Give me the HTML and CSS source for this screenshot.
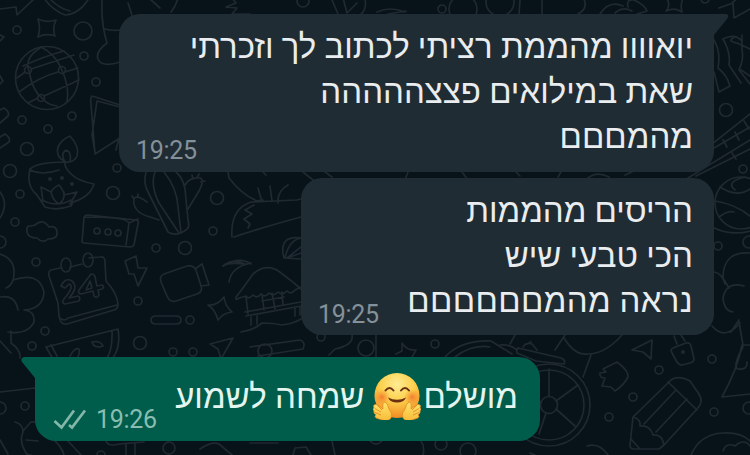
FILE: index.html
```html
<!DOCTYPE html>
<html lang="he">
<head>
<meta charset="utf-8">
<title>צ'אט</title>
<link rel="stylesheet" href="styles.css">
</head>
<body>
<svg class="wallpaper" viewBox="0 0 750 455" aria-hidden="true">
  <!-- small dots -->
  <g>
    <circle cx="17" cy="30" r="4"/><circle cx="83" cy="31" r="9"/><circle cx="84" cy="56" r="4"/><circle cx="96" cy="82" r="4"/>
    <circle cx="72" cy="116" r="4"/><circle cx="48" cy="129" r="4"/><circle cx="22" cy="120" r="4"/><circle cx="27" cy="149" r="6.500"/>
    <circle cx="10" cy="171" r="6.500"/><circle cx="20" cy="194" r="4"/><circle cx="15" cy="222" r="4"/><circle cx="117" cy="168" r="4"/>
    <circle cx="113" cy="193" r="6.500"/><circle cx="217" cy="198" r="6.500"/><circle cx="213" cy="231" r="4"/><circle cx="185" cy="248" r="6.500"/>
    <circle cx="156" cy="248" r="4"/><circle cx="36" cy="262" r="4"/><circle cx="138" cy="301" r="4"/><circle cx="190" cy="320" r="4"/>
    <circle cx="140" cy="343" r="6.500"/><circle cx="173" cy="352" r="4"/><circle cx="193" cy="352" r="4"/><circle cx="45" cy="331" r="4"/>
    <circle cx="32" cy="346" r="4"/><circle cx="25" cy="406" r="4"/><circle cx="0" cy="408" r="6"/><circle cx="0" cy="242" r="6"/>
    <circle cx="169" cy="448" r="6"/><circle cx="101" cy="455" r="4"/><circle cx="321" cy="337" r="4"/><circle cx="435" cy="344" r="4"/>
    <circle cx="441" cy="444" r="6"/><circle cx="468" cy="451" r="8"/><circle cx="609" cy="417" r="4"/><circle cx="633" cy="397" r="4"/>
    <circle cx="659" cy="370" r="4"/><circle cx="712" cy="359" r="4"/><circle cx="714" cy="412" r="4"/><circle cx="749" cy="408" r="6"/>
    <circle cx="718" cy="246" r="4"/><circle cx="749" cy="242" r="6"/><circle cx="726" cy="110" r="6.500"/><circle cx="743" cy="169" r="4"/>
    <circle cx="303" cy="1" r="6"/><circle cx="705" cy="-1" r="4"/>
  </g>
  <!-- leaf, sparkle, globe -->
  <path d="M0 9l16-2 1 8 18-17M44-2q8 12 21 17q15-1 24-17M50-1q10 10 20 12"/>
  <path d="M38 19q8 4 18 1q-4 8-1 16q-9-3-17 1q3-9 0-18zM0 35l4 2-4 4M0 76l3 5-3 3"/>
  <circle cx="47" cy="78" r="31.500"/>
  <path d="M40 48q-16 10-11 23q4 20 12 26q6 8 16 9M41 47q14 7 20 21q9 19 6 34M64 51Q45 56 23 66M25 72L17 78M58 72Q39 77 19 92M31 69L74 55M65 72l13-4M79 80L44 96M38 98l-10 5"/>
  <g><circle cx="28" cy="70" r="3.500"/><circle cx="62" cy="70" r="3.500"/><circle cx="41" cy="98" r="3.500"/></g>
  <!-- stocking, paper -->
  <path d="M102 0q-1 24 5 43q-12 9-9 16q4 9 22 3M105 29q7 2 15 1M128 3l4 12M150-1l10 9M178-2q-2 8-7 14"/>
  <path d="M120 105L92 96q-2 2-1 8l4 50 25-16M120 107L97 101l-5 34 3 17M119 138l-3 12"/>
  <path d="M0 110l4-2q6 4 4 8l-8 7M0 137l5-3q6 4 4 8l-9 6M0 192q9 12 0 26"/>
  <!-- oil lamp -->
  <path d="M65 162q-10-6-7-15q4-8 12-11q10 11 7 20q-3 7-12 6q-5-8 1-12q6 2 4 11M65 162q-27 0-35 7q-4 17 7 26l8 12q11 4 26-1l2-4q17-5 21-18q-16-3-23-10t-6-12zM30 170q12 6 29 0M43 201l-2-14 10 5q3-5 8-7q5 6 5 10l13-3-7 12M51 192q2 9 8 12q6-4 5-12M42 200q15 8 29 0"/>
  <g class="solid"><circle cx="50" cy="179" r="2"/><circle cx="62" cy="178" r="2"/><circle cx="72" cy="184" r="2"/></g>
  <!-- message block and cloud -->
  <path d="M82 242l2-24q0-3 4-3l48 5q3 0 2 4l-4 21q-1 2-4 2l-46-4zM84 217q43 0 45 6l-3 22M129 223l9-4"/>
  <g><circle cx="97" cy="231" r="3"/><circle cx="108" cy="232" r="3"/><circle cx="118" cy="233" r="3"/></g>
  <path d="M31 226q-5-1-4 6q1 6 10 6q6 6 11 1q10 0 9-7q-1-7-8-5q-6-9-14-2z"/>
  <!-- cactus -->
  <path d="M146 172q-3 11 2 20l20 40q8 5 18-2q4-2 2-10l-3-31q-2-11-9-17M155 172q-5 13 4 31l20 30M164 172q13 16 14 35l3 26M147 202q-11-8-13-3q-2 13 16 18l9 3M185 185q4-8 15-7q5 1-1 13l-11 18M134 199l-2-3M138 197v-3M193 179l-1-4M197 178l2-4M201 182l4-1"/>
  <!-- hand and rabbit outline -->
  <path d="M228 172l1 6q12 16 28 23l6-1M232 237q-2-28 19-35l46-2q10-2 18-10M234 237q23-8 67-20M254 205l-9 5 7 4-8 5 6 5-2 4M258 188l4 14M270 186l2 15M288 185q-11 6-10 18"/>
  <path d="M303 172l10 8M325 172l7 5M405 180l3-8M462 172l6 8"/>
  <!-- calendar -->
  <path d="M60 268l-9 2q-3 1-2 6l9 27 1 13q1 9 8 8l47-14q4-1 4-6-1-11-12-23l-1-19q0-6-5-5l-11 1M70 267l12-3M60 318q4 4 8 0l49-13"/>
  <ellipse cx="66" cy="265" rx="5" ry="7"/><ellipse cx="88" cy="260" rx="5" ry="7"/>
  <path d="M61 286q4-9 11-5q7 6-3 17l9-2q3 1 1 5l-14 3q-4-1-1-5q11-13 5-15l-4 4zM91 274q4 0 4 3l2 9 5-1q3 2 0 4l-4 1 1 5q-2 4-5 1l-1-5-12 3q-4-1-2-4zM90 281l-4 9 6-2z"/>
  <!-- bolt, camera, pill, star -->
  <path d="M125 261l11-5 2 12 9 0-9 18-4-12-5 0zM164 274l23-8q7-1 9 4l5 16q2 6-4 8l-21 7q-6 2-9-5l-6-14q-2-6 3-8zM195 269l7-5 7 21-8 1M156 316h20q5 0 5 4t-5 4h-20q-5 0-5-4t5-4zM208 305q9 1 16-8q1 9 8 15q-9 1-14 8q-3-11-10-15zM210 344l23-6-12 21-3-10z"/>
  <!-- beach hut -->
  <path d="M236 297q5-6 17-23q14-12 28-1q11 8 20 16M236 297q-1 4 3 1l7-2q2 4 7-1q4 4 8-1q4 4 8-1q4 4 9-1q4 4 9-1q4 4 8-1l6-3M223 266q9-8 22-2q-17-2-22 2M223 266q16-10 28-2M229 282q2-15 22-19M301 238q-23-3-17 20l17 1M285 258q4-18 16-20M301 247l-14 11 14-5M246 297l2 17M262 294l2 16M272 293l3 16M282 292l1 13M262 301l22-4M245 312l56-10M246 316l55-10M251 317v8M257 316v8M295 308v8M300 307v8M241 332q13-2 21-9 12 0 19 2q12-1 20-6"/>
  <!-- flower tree and fruit -->
  <path d="M0 254q18 6 13 26q-2 6-7 8M13 280q26-9 31 12q-1 17-20 18M0 297q15-3 18 13M24 310q11 1 10 12q-6 13-26 10M11 331v12q10 7 9 15M0 341l11 12M46 347l72-18q4 25-13 36M46 347q7 13 12 18M51 345l6 11M112 331q1 22-8 31M70 356q5-9 9-7q1 3-1 8M92 342q8-2 11 4q-9 3-11-4M0 392l35-4M15 422q8 2 8 10q-4 9 2 19q1 4 6 4M23 431l8-9q6-1 10 4l12 13q9 8 11 16M26 440l12 1M0 440l8 14M106 441q2 6 13 3l25-2M126 444v11M135 443v12M68 441l14 15"/>
  <!-- top strip -->
  <path d="M226 7l10-4-5-6M226 7l11 1-5 6h18M332 0l6 14M343-2l4 15 10-10M365-1q2 10-4 15M377 12q13-6 28 0M388 14l18-3M520 0l-1 14M542-2v16M584-1q4 10-6 15M600 14q9-14 23-8M615 13q8-7 17-2M628 7q-2-8 6-7q11 5 13 11l-10 3"/>
  <g><circle cx="442" cy="9" r="4"/><circle cx="463" cy="9" r="14"/><circle cx="500" cy="2" r="14"/></g>
  <path d="M667-1q4 7-1 12q9-4 16 1q-2-7 1-14M719 8l14-5 1 15 16-9M733 2l5-4"/>
  <!-- books and film, right edge -->
  <path d="M714 40q7 12 4 28q9 7 12 18l-11 6-5-20M723 39q12-6 19 2M723 39q8 14 6 26l12 18M742 35v15M735 37q-9 4 2 6l13 6M742 50q2 9-3 20l11 14M741 70l9 6"/>
  <path d="M688 178l62-38M696 176l54-27M692 160l58-46M714 148l36-21M723 140l4 7M735 132l4 8M732 153l4 6M744 121l5 8"/>
  <circle cx="741" cy="203" r="26"/><path d="M720 187q17 11 30 2M715 201q20 3 35 15M719 217q9-7 15-5M745 177q-20 5-10 13"/>
  <!-- tree right -->
  <path d="M714 228q18 8 36 3M750 253q-27-2-27 25l6 10M714 272q8 1 11 12M744 286q-18-5-21 12q1 13 10 14M712 326q13 15 28-3M739 320l-8 12M739 322l4 23h7M742 345q-4 23-20 52l28-3M743 347q-11 20-5 22q10 1 9-7"/>
  <!-- lock, plane, puzzle, pencil -->
  <path d="M674 336l3 8M681 335l4 6M673 348l13-5q4-1 5 3l3 13q0 3-4 4l-8 2q-3 0-5-3l-5-9q-2-4 1-5zM632 350l20-10-1 19-8-7zM603 369l14-7q12 9 11 15q-4 8-13 14l-4-4-9-1 3-8q-6 0-5-5l6-1z"/>
  <circle class="solid" cx="683" cy="352" r="2"/>
  <path d="M633 417l38-37q7-5 19 1l9 13q5 8-2 15l-33 36-5 4h-25q-4 0-4-4zM633 417q8 2 7 9q10-1 13 9q9-1 11 10M644 424l32-34M668 382l29 28M656 432l31-33M631 439l8 9"/>
  <!-- wheel -->
  <circle cx="549" cy="405" r="41"/><circle cx="549" cy="405" r="35"/><circle cx="549" cy="405" r="8.500"/>
  <path d="M549 396v-27M556 401l22-16M556 409l19 17M546 413l-7 21M541 402l-20-10M518 348l43 10q5 2 3 6l-28-3-19-8q-1-4 1-5M523 347q3-5 9-3l5 6M527 344l4-2M510 344l5-9M500 345q10-1 17 5M555 350l10-15M564 338q11 18 24 16q17 0 34-19M591 355l-8 22"/>
  <path d="M587 446q12-4 21 9M691 455q9-21 32-22q18-1 27 8M723 451q3-9 12-5q9-8 15 0M530 453l5 2"/>
  <!-- strip between bubbles two and three -->
  <path d="M250 347l50-7q6 2 3 9l-45 7M329 355l6-6q19-4 17-14M376 335v22M396 354l6-3v-8q5 8 14 7l-4 7M445 357q16-17 46-16l21 13M455 357q17-13 35-10"/>
  <circle cx="265" cy="351" r="7"/><circle cx="366" cy="348" r="8"/>
  <path d="M250 443h28M293 455l2-7 11-1 5 8M332 441l3 14M370 441q6 6 12 0M421 441q4 6 2 14M200 449q12-8 19-5l13 11"/>
  <path d="M263 172l3 3M516 172l4 4M561 172l-3 5M588 178q9-7 21-1M625 175l7-3"/>
</svg>

<main class="chat">
  <section class="bubble incoming first" dir="rtl">
    <svg class="tail" viewBox="0 0 20 24"><path d="M0 0H17Q21 1 18 5L5 21L5 24H0z"/></svg>
    <p><span>יואוווו מהממת רציתי לכתוב לך וזכרתי</span><span>שאת במילואים פצצההההה</span><span>מהמםםם</span></p>
    <div class="meta" dir="ltr"><time>19:25</time></div>
  </section>
  <section class="bubble incoming second" dir="rtl">
    <p><span>הריסים מהממות</span><span>הכי טבעי שיש</span><span class="stretched">נראה מהמםםםםםם</span></p>
    <div class="meta" dir="ltr"><time>19:25</time></div>
  </section>
  <section class="bubble outgoing" dir="rtl">
    <svg class="tail" viewBox="0 0 20 24"><path d="M20 0H3Q-1 1 1 5L14 21V24H20z"/></svg>
    <p class="row"><span>מושלם</span>
      <svg class="hug" viewBox="0 0 48 48" role="img" aria-label="חיבוק">
        <defs>
          <radialGradient id="face" cx="50%" cy="25%" r="75%"><stop offset="0" stop-color="#ffec94"/><stop offset=".5" stop-color="#fdd04c"/><stop offset="1" stop-color="#ef8a24"/></radialGradient>
          <radialGradient id="cheek"><stop offset="0" stop-color="#f2652b" stop-opacity=".75"/><stop offset="1" stop-color="#f2852b" stop-opacity="0"/></radialGradient>
          <linearGradient id="hand" x1="0" y1="0" x2="0" y2="1"><stop offset="0" stop-color="#ffe56a"/><stop offset="1" stop-color="#f8bb3a"/></linearGradient>
        </defs>
        <circle cx="24" cy="23.500" r="22.500" fill="url(#face)"/>
        <circle cx="9" cy="25" r="8" fill="url(#cheek)"/><circle cx="39" cy="25" r="8" fill="url(#cheek)"/>
        <path class="ink" d="M12.500 18.500q4-5 8 0M28 18.500q4-5 8 0"/>
        <path d="M15 25.500q9 4.500 18 0q-2 5-9 5t-9-5z" fill="#6b3014"/>
        <g id="palm"><path d="M1 33q2-2 5 1l4 3q-1-7 2-7q3 2 4 7q4 5 2 9q-3 4-9 2l-6-2q-2-2 0-3q-3-2-2-4q-2-2 0-3q-1-2 0-3z" fill="url(#hand)" stroke="#df8420" stroke-width=".7"/><path d="M2 36.500l6 3.500M2 40.500l6 2.500M4 33l5 5" fill="none" stroke="#df8420" stroke-width=".8"/></g>
        <use href="#palm" transform="translate(48 0) scale(-1 1)"/>
      </svg>
      <span>שמחה לשמוע</span></p>
    <div class="meta" dir="ltr"><svg class="ticks" viewBox="0 0 34 22"><path d="M1.500 13l7 6.500L21 2.500M16 17l3 2.500L32 2.500"/></svg><time>19:26</time></div>
  </section>
</main>
</body>
</html>
```
FILE: styles.css
```css
* { box-sizing: border-box; }
body {
  margin: 0;
  width: 750px;
  height: 455px;
  overflow: hidden;
  background: #071219;
  font-family: Roboto, sans-serif;
}
.wallpaper {
  position: absolute;
  inset: 0;
  width: 750px;
  height: 455px;
  fill: none;
  stroke: #202930;
  stroke-width: 1.7;
  stroke-linecap: round;
  stroke-linejoin: round;
}
.wallpaper .solid { fill: #202930; stroke: none; }
.chat {
  position: relative;
  display: flex;
  flex-direction: column;
  padding: 14px 36px 0 35px;
}
.bubble {
  position: relative;
  display: flex;
  justify-content: space-between;
  align-items: flex-end;
  border-radius: 21px;
  color: #e9edef;
}
.incoming { align-self: flex-end; background: #202c33; }
.first { width: 595px; height: 158px; padding: 9px 21px 13px 17px; border-top-right-radius: 0; }
.second { width: 413px; height: 157px; margin-top: 6px; padding: 9px 21px 12px 17px; }
.outgoing {
  align-self: flex-start;
  width: 505px;
  height: 84px;
  margin-top: 22px;
  padding: 17px 22px 21px 18px;
  background: #005d4b;
  border-top-left-radius: 0;
  color: #e4f5f0;
}
.tail { position: absolute; top: 0; width: 20px; height: 24px; }
.first .tail { right: -15px; fill: #202c33; }
.outgoing .tail { left: -14px; fill: #005d4b; }
p {
  display: flex;
  flex-direction: column;
  min-width: 0;
  margin: 0;
  font-size: 33px;
  line-height: 45px;
  white-space: nowrap;
}
.stretched { letter-spacing: 0.35px; }
.row { flex-direction: row; align-items: center; }
.hug { flex: none; width: 48px; height: 48px; margin: 0 2px 0 9px; }
.hug .ink { fill: none; stroke: #6b3014; stroke-width: 2; stroke-linecap: round; }
.meta {
  flex: none;
  display: flex;
  align-items: center;
  gap: 9px;
  height: 20px;
  margin-bottom: -2px;
  color: #84919a;
  font: 25px/20px Roboto, sans-serif;
  letter-spacing: -0.3px;
}
.outgoing .meta { color: #8abdb1; margin-bottom: -10px; }
.ticks { width: 34px; height: 22px; margin-top: -2px; fill: none; stroke: #83b7aa; stroke-width: 2.7; }
```
